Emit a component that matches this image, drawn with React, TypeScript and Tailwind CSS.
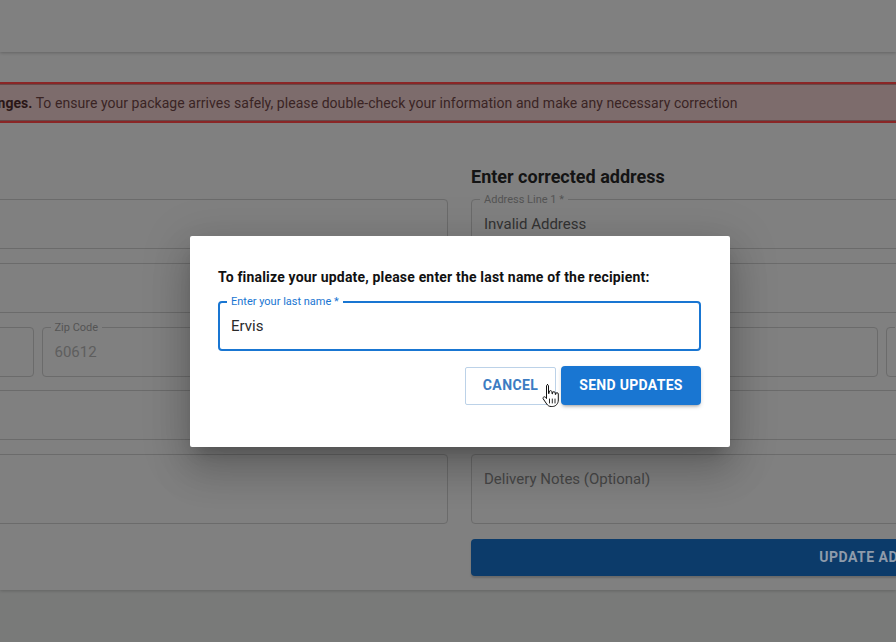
import React from "react";

function Field({
  label,
  value,
  muted,
  className = "",
  tall,
}: {
  label?: string;
  value?: string;
  muted?: boolean;
  className?: string;
  tall?: boolean;
}) {
  return (
    <div
      className={`relative flex ${tall ? "h-[70px] items-start pt-[14px]" : "h-[50px] items-center"} rounded-[4px] border border-[#6b6b6b] px-[12px] ${className}`}
    >
      {label && (
        <span className="absolute left-[8px] top-[-7px] bg-[#808080] px-[4px] text-[11px] leading-[13px] text-[#545454]">
          {label}
        </span>
      )}
      {value && (
        <span
          className={`text-[15px] leading-[20px] ${muted ? "text-[#5e5e5e]" : "text-[#333333]"}`}
        >
          {value}
        </span>
      )}
    </div>
  );
}

function Placeholder({ text }: { text: string }) {
  return (
    <div className="flex h-[70px] items-start rounded-[4px] border border-[#6b6b6b] px-[12px] pt-[14px]">
      <span className="text-[15px] leading-[20px] text-[#474747]">{text}</span>
    </div>
  );
}

function HandCursor() {
  return (
    <svg width="18" height="25" viewBox="0 0 18 25" className="absolute left-[542px] top-[383px]">
      <path
        d="M5 1.5c.8 0 1.5.7 1.5 1.5v7.5h.6V9c0-.8.6-1.4 1.4-1.4S10 8.2 10 9v1.8h.5V10c0-.8.6-1.3 1.4-1.3s1.4.6 1.4 1.3v1.5h.4v-.6c0-.7.6-1.2 1.3-1.2s1.3.5 1.3 1.2V17c0 3.6-2.4 6.5-6 6.5H9.2c-2 0-3.4-.9-4.5-2.5l-3.4-5c-.5-.7-.3-1.6.4-2 .6-.4 1.4-.2 1.9.4l.9 1.2V3c0-.8.7-1.5 1.5-1.5z"
        fill="#ffffff"
        stroke="#111111"
        strokeWidth="1"
        strokeLinejoin="round"
      />
      <path d="M7.5 16v4M10.3 16v4M13 16v4" stroke="#111111" strokeWidth="0.9" strokeLinecap="round" />
    </svg>
  );
}

export default function App() {
  return (
    <div className="relative h-[642px] w-[896px] overflow-hidden bg-[#797a79] font-['Roboto','Liberation_Sans',sans-serif]">
      <header className="relative z-10 h-[52px] bg-[#808080] shadow-[0_1px_3px_rgba(0,0,0,0.22)]" />
      <main className="h-[538px] bg-[#808080] pt-[30px] shadow-[0_1px_3px_rgba(0,0,0,0.18)]">
        <div className="-ml-[373px] flex h-[41px] w-[1700px] items-center border-2 border-[#8a2626] bg-[#7d6c6c] pl-[87px] pt-[1px] text-[14px] text-[#3a2424] shadow-[inset_0_0_0_1px_rgba(60,10,10,0.35)]">
          <span className="whitespace-nowrap tracking-[0.05px]">
            <strong className="font-bold text-[#2a1616]">We were unable to validate your address changes.</strong>{" "}
            To ensure your package arrives safely, please double-check your information and make any necessary correction
          </span>
        </div>

        <div className="-ml-[373px] mt-[41px] flex w-[1665px] gap-[23px]">
          <section className="flex w-[821px] flex-col">
            <h2 className="h-[24px] pt-[1px] text-[18px] font-bold leading-[24px] text-[#141414]">Current address</h2>
            <div className="mt-[11px] flex flex-col gap-[14px]">
              <Field label="Address Line 1" value="2200 W Harrison St" muted />
              <Field label="Address Line 2" muted />
              <div className="flex h-[49px] gap-[8px]">
                <Field label="City" value="Chicago" muted className="h-[49px] flex-1" />
                <Field label="Zip Code" value="60612" muted className="h-[49px] flex-1" />
              </div>
              <Field label="State" value="IL" muted />
              <Field label="Delivery Notes" tall muted />
            </div>
          </section>

          <section className="flex w-[821px] flex-col">
            <h2 className="h-[24px] pt-[1px] text-[18px] font-bold leading-[24px] text-[#141414]">Enter corrected address</h2>
            <div className="mt-[11px] flex flex-col gap-[14px]">
              <Field label="Address Line 1 *" value="Invalid Address" />
              <Field label="Address Line 2" />
              <div className="flex h-[49px] gap-[8px]">
                <Field label="City *" className="h-[49px] flex-1" />
                <Field label="Zip Code *" className="h-[49px] flex-1" />
              </div>
              <Field label="State *" />
              <Placeholder text="Delivery Notes (Optional)" />
              <button className="mt-[1px] h-[37px] rounded-[4px] bg-[#0c3b6a] text-[14px] font-bold tracking-[0.5px] text-[#8f9bab] shadow-[0_2px_2px_rgba(0,0,0,0.18)]">
                UPDATE ADDRESS
              </button>
            </div>
          </section>
        </div>
      </main>

      <div className="absolute left-[190px] top-[236px] h-[211px] w-[540px] rounded-[2px] bg-white pl-[28px] pr-[29px] pt-[31px] shadow-[0_11px_15px_-7px_rgba(0,0,0,0.2),0_24px_38px_3px_rgba(0,0,0,0.14),0_9px_46px_8px_rgba(0,0,0,0.12)]">
        <p className="text-[14px] font-bold leading-[20px] tracking-[0.18px] text-[#111111]">
          To finalize your update, please enter the last name of the recipient:
        </p>
        <div className="relative mt-[14px] flex h-[50px] items-center rounded-[4px] border-2 border-[#1976d2] px-[11px]">
          <span className="absolute left-[7px] top-[-8px] bg-white px-[4px] text-[11px] leading-[13px] text-[#1976d2]">
            Enter your last name *
          </span>
          <span className="text-[15px] leading-[20px] text-[#2a2a2a]">Ervis</span>
        </div>
        <div className="mt-[15px] flex items-center justify-end gap-[5px]">
          <button className="h-[38px] w-[91px] rounded-[2px] border border-[#bcd2e8] text-[14px] font-bold tracking-[0.4px] text-[#3c7cc2]">
            CANCEL
          </button>
          <button className="h-[39px] w-[140px] rounded-[4px] bg-[#1976d2] text-[14px] font-bold tracking-[0.3px] text-white shadow-[0_3px_3px_-2px_rgba(0,0,0,0.25),0_2px_4px_rgba(0,0,0,0.14)]">
            SEND UPDATES
          </button>
        </div>
      </div>

      <HandCursor />
    </div>
  );
}
